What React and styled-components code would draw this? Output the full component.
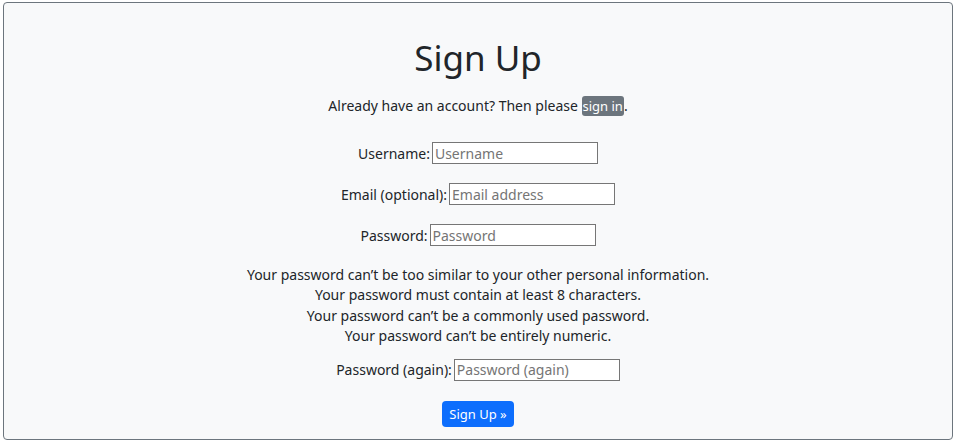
import React from "react";
import styled, { createGlobalStyle } from "styled-components";

const Global = createGlobalStyle`
  * { box-sizing: border-box; }
  html, body { margin: 0; padding: 0; background: #fff; }
  body {
    font-family: "Noto Sans", "Open Sans", sans-serif;
    color: #212529;
  }
`;

const Page = styled.div`
  padding: 2px 4px 4px 3px;
`;

const Card = styled.div`
  border: 1px solid #6c757d;
  border-radius: 4px;
  background: #f8f9fa;
  height: 438px;
  display: flex;
  flex-direction: column;
  align-items: center;
  padding-top: 33px;
`;

const Title = styled.h1`
  margin: 0;
  font-size: 35px;
  font-weight: 400;
  line-height: 43px;
`;

const Lead = styled.p`
  margin: 16px 0 0;
  font-size: 14px;
  line-height: 22px;
`;

const Badge = styled.a`
  display: inline-block;
  background: #6c757d;
  color: #fff;
  border-radius: 3px;
  padding: 0 1px;
  font-size: 13px;
  line-height: 20px;
  text-decoration: none;
`;

const Form = styled.form`
  display: flex;
  flex-direction: column;
  align-items: center;
  margin-top: 25px;
`;

const Row = styled.div`
  display: flex;
  align-items: center;
  gap: 2px;
  height: 22px;
  margin-bottom: ${(p) => p.$gap || 19}px;
  font-size: 14px;
`;

const Input = styled.input`
  width: 166px;
  height: 22px;
  border: 1px solid #767676;
  background: #fff;
  font: inherit;
  font-size: 14px;
  padding: 0 2px;
  color: #212529;
  &::placeholder { color: #757575; }
`;

const Help = styled.ul`
  list-style: none;
  margin: 0 0 12px;
  padding: 0;
  text-align: center;
  font-size: 14px;
  line-height: 20.4px;
`;

const Button = styled.button`
  background: #0d6efd;
  color: #fff;
  border: none;
  border-radius: 4px;
  font: inherit;
  font-size: 13px;
  height: 26px;
  padding: 0 7px;
`;

const fields = [
  { label: "Username:", ph: "Username", type: "text" },
  { label: "Email (optional):", ph: "Email address", type: "email" },
  { label: "Password:", ph: "Password", type: "password" },
];

const rules = [
  "Your password can’t be too similar to your other personal information.",
  "Your password must contain at least 8 characters.",
  "Your password can’t be a commonly used password.",
  "Your password can’t be entirely numeric.",
];

export default function App() {
  return (
    <Page>
      <Global />
      <Card>
        <Title>Sign Up</Title>
        <Lead>
          Already have an account? Then please <Badge href="#">sign in</Badge>.
        </Lead>
        <Form onSubmit={(e) => e.preventDefault()}>
          {fields.map((f) => (
            <Row key={f.label}>
              <label>{f.label}</label>
              <Input type={f.type} placeholder={f.ph} />
            </Row>
          ))}
          <Help>
            {rules.map((r) => (
              <li key={r}>{r}</li>
            ))}
          </Help>
          <Row $gap={20}>
            <label>Password (again):</label>
            <Input type="password" placeholder="Password (again)" />
          </Row>
          <Button type="submit">Sign Up »</Button>
        </Form>
      </Card>
    </Page>
  );
}
